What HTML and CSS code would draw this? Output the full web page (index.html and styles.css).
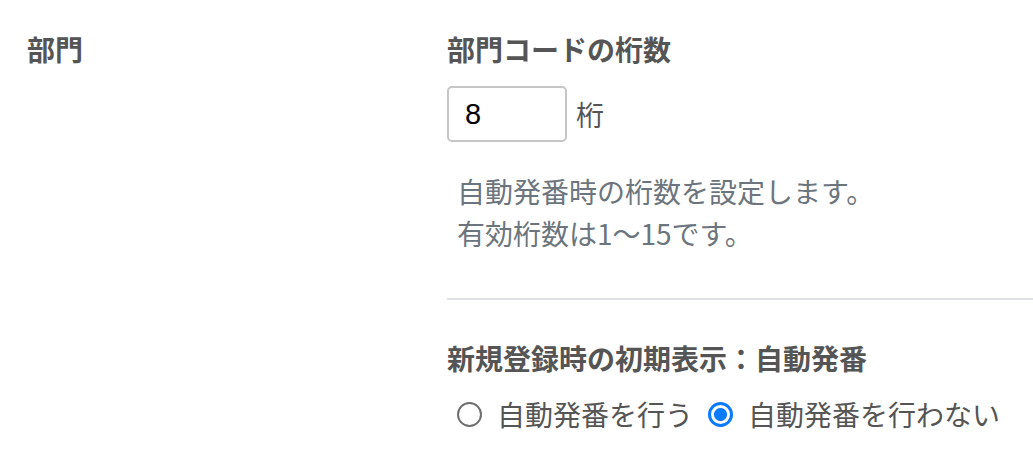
FILE: index.html
```html
<!DOCTYPE html>
<html lang="ja">
<head>
    <meta charset="UTF-8">
    <meta name="viewport" content="width=device-width, initial-scale=1.0">
    <title>部門設定</title>
    <link rel="stylesheet" href="styles.css">
</head>
<body>
    <div class="setting-row">
        <div class="side-label">部門</div>
        <div class="content">
            <div class="item-title">部門コードの桁数</div>
            <div class="digit-row">
                <input type="text" class="digit-input" value="8">
                <span class="unit">桁</span>
            </div>
            <p class="help">自動発番時の桁数を設定します。<br>有効桁数は1〜15です。</p>

            <hr class="divider">

            <div class="item-title">新規登録時の初期表示：自動発番</div>
            <div class="radio-row">
                <label class="radio-item"><input type="radio" name="auto" value="on"><span>自動発番を行う</span></label>
                <label class="radio-item"><input type="radio" name="auto" value="off" checked><span>自動発番を行わない</span></label>
            </div>
        </div>
    </div>
</body>
</html>
```

FILE: styles.css
```css
body {
    margin: 0;
    background: #fff;
    font-family: "Noto Sans CJK JP", "Noto Sans", sans-serif;
    color: #555;
}

.setting-row {
    display: flex;
    padding-top: 29px;
}

.side-label {
    width: 447px;
    box-sizing: border-box;
    padding-left: 27px;
    font-size: 28px;
    line-height: 40px;
    font-weight: bold;
    color: #555;
}

.content {
    flex: 1;
}

.item-title {
    font-size: 28px;
    line-height: 40px;
    font-weight: bold;
    color: #555;
}

.digit-row {
    display: flex;
    align-items: center;
    margin-top: 17px;
}

.digit-input {
    width: 120px;
    height: 56px;
    box-sizing: border-box;
    border: 2px solid #c6c6c6;
    border-radius: 5px;
    padding: 0 16px;
    font-family: "Liberation Sans", Arial, sans-serif;
    font-size: 29px;
    color: #000;
    outline: none;
}

.unit {
    margin-left: 9px;
    font-size: 28px;
    color: #555;
}

.help {
    margin: 28px 0 0 10px;
    font-size: 28px;
    line-height: 42px;
    color: #6c757d;
}

.divider {
    margin: 44px 0 38px;
    border: 0;
    border-top: 2px solid #dee2e6;
}

.radio-row {
    display: flex;
    margin-top: 16px;
    padding-left: 10px;
    line-height: 40px;
}

.radio-item {
    display: flex;
    align-items: center;
    margin-right: 15px;
    font-size: 28px;
    color: #555;
}

.radio-item input {
    appearance: none;
    width: 25px;
    height: 25px;
    margin: 0 15px 0 0;
    border: 2px solid #6e6e6e;
    border-radius: 50%;
    box-sizing: border-box;
}

.radio-item input:checked {
    border: 3px solid #0a7aff;
    background: radial-gradient(circle, #0a7aff 0 6px, #fff 7px);
}
```
